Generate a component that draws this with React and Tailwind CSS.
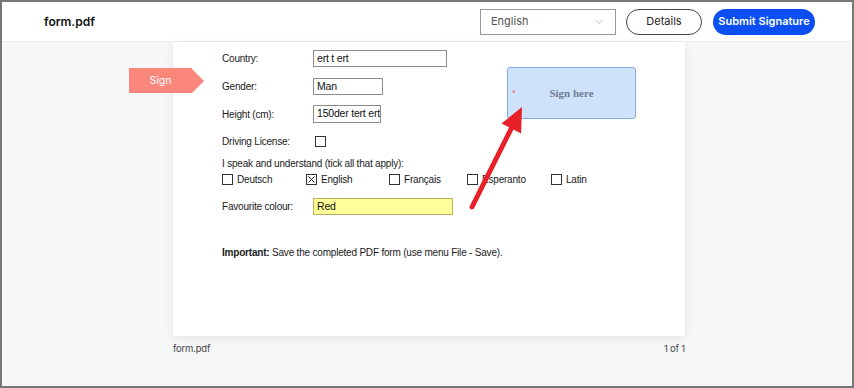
import { ChevronDown } from "lucide-react";

function Box({ checked }) {
  return (
    <span className="w-[11px] h-[11px] border border-[#333] bg-white flex items-center justify-center shrink-0">
      {checked && (
        <svg width="9" height="9" viewBox="0 0 9 9">
          <path d="M1.5 1.5L7.5 7.5M7.5 1.5L1.5 7.5" stroke="#222" strokeWidth="1" />
        </svg>
      )}
    </span>
  );
}

function Field({ w, h = 17, value, yellow }) {
  return (
    <div
      className={
        "border flex items-center pl-[3px] text-[10.5px] text-[#111] overflow-hidden whitespace-nowrap " +
        (yellow ? "bg-[#ffff99] border-[#b9b25c]" : "bg-white border-[#8c8c8c]")
      }
      style={{ width: w, height: h }}
    >
      {value}
    </div>
  );
}

export default function App() {
  const langs = [
    { name: "Deutsch", w: 84 },
    { name: "English", w: 83, checked: true },
    { name: "Français", w: 78 },
    { name: "Esperanto", w: 84 },
    { name: "Latin", w: 50 },
  ];

  return (
    <div className="w-[854px] h-[388px] border-2 border-[#777] bg-[#f6f7f9] flex flex-col overflow-hidden font-['Inter',sans-serif]">
      {/* header */}
      <div className="h-[40px] shrink-0 bg-white border-b border-[#eceef1] flex items-center pl-[42px] pr-[37px]">
        <div className="text-[12px] font-semibold text-[#111]">form.pdf</div>
        <div className="ml-auto flex items-center">
          <div className="w-[136px] h-[26px] border border-[#9a9a9a] flex items-center justify-between px-[10px] text-[11px] text-[#555]">
            <span>English</span>
            <ChevronDown size={12} strokeWidth={1.2} className="text-[#888]" />
          </div>
          <button className="ml-[10px] w-[76px] h-[26px] rounded-full border border-[#444] text-[11px] text-[#222]">
            Details
          </button>
          <button className="ml-[11px] w-[102px] h-[26px] rounded-full bg-[#0b4ff2] text-white text-[11px] font-semibold">
            Submit Signature
          </button>
        </div>
      </div>

      {/* body */}
      <div className="flex-1 pl-[171px]">
        <div className="w-[512px]">
          <div className="relative h-[294px] bg-white shadow-[0_2px_10px_rgba(0,0,0,0.08)] pl-[49px] font-['Liberation_Sans',Arial,sans-serif] text-[10px] tracking-[-0.2px] text-[#1a1a1a]">
            {/* sign tag */}
            <div className="absolute left-[-44px] top-[26px] flex items-center tracking-normal">
              <div className="w-[63px] h-[25px] bg-[#fb867c] text-white text-[10.5px] flex items-center justify-center font-['Inter',sans-serif]">
                Sign
              </div>
              <div className="w-0 h-0 border-y-[12.5px] border-y-transparent border-l-[12px] border-l-[#fb867c]" />
            </div>

            <div className="pt-[8px]">
              <div className="flex items-center h-[17px]">
                <span className="w-[91px]">Country:</span>
                <Field w={134} value="ert t ert" />
              </div>
              <div className="flex items-center h-[17px] mt-[11px]">
                <span className="w-[91px]">Gender:</span>
                <Field w={70} value="Man" />
              </div>
              <div className="flex items-center h-[18px] mt-[10px]">
                <span className="w-[91px]">Height (cm):</span>
                <Field w={68} h={18} value="150der tert ert" />
              </div>
              <div className="flex items-center h-[11px] mt-[13px]">
                <span className="w-[93px]">Driving License:</span>
                <Box />
              </div>
              <div className="h-[12px] leading-[12px] mt-[11px]">
                I speak and understand (tick all that apply):
              </div>
              <div className="flex items-center h-[11px] mt-[4px]">
                {langs.map((l) => (
                  <div key={l.name} className="flex items-center gap-[4px]" style={{ width: l.w }}>
                    <Box checked={l.checked} />
                    <span>{l.name}</span>
                  </div>
                ))}
              </div>
              <div className="flex items-center h-[17px] mt-[13px]">
                <span className="w-[91px]">Favourite colour:</span>
                <Field w={140} value="Red" yellow />
              </div>
              <div className="h-[12px] leading-[12px] mt-[32px]">
                <span className="font-bold">Important:</span> Save the completed PDF form (use menu File - Save).
              </div>
            </div>

            {/* signature field */}
            <div className="absolute left-[334px] top-[25px] w-[129px] h-[52px] bg-[#cfe2fb] border border-[#86ace0] rounded-[3px] flex items-center justify-center tracking-normal">
              <span className="absolute left-[4px] top-[19px] text-[#e86a6a] text-[9px]">*</span>
              <span className="font-['Liberation_Serif',serif] font-bold text-[11px] text-[#6e7c92]">Sign here</span>
            </div>

            {/* arrow */}
            <svg className="absolute left-0 top-0 pointer-events-none" width="512" height="294">
              <line x1="299" y1="165" x2="340" y2="83" stroke="#e8202a" strokeWidth="5" strokeLinecap="round" />
              <polygon points="349,65 328.5,81.6 348.1,91.4" fill="#e8202a" />
            </svg>
          </div>
          <div className="flex justify-between mt-[6px] text-[9.5px] text-[#444] tracking-[-0.2px]">
            <span>form.pdf</span>
            <span>1 of 1</span>
          </div>
        </div>
      </div>
    </div>
  );
}
